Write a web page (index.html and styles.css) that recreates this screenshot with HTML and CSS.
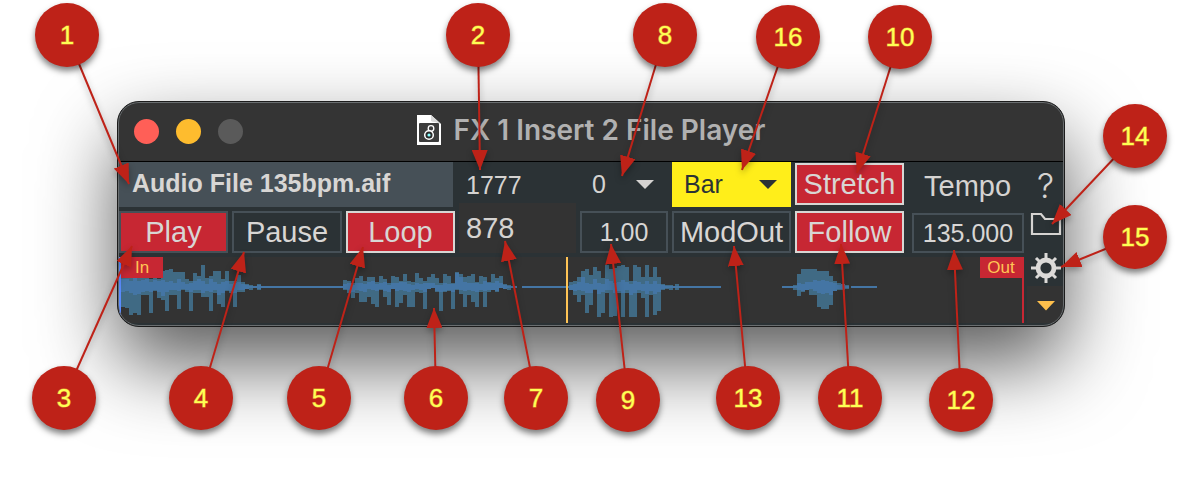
FILE: index.html
```
<!DOCTYPE html>
<html lang="en">
  <head>
    <meta charset="UTF-8" />
    <meta name="viewport" content="width=device-width, initial-scale=1.0" />
    <title>FX 1 Insert 2 File Player</title>
    <link rel="stylesheet" href="styles.css">
  </head>
  <body>
    <main class="diagram">
      <section class="window">
        <header class="titlebar">
          <div class="lights">
            <button class="light close" aria-label="Close"></button>
            <button class="light minimize" aria-label="Minimize"></button>
            <button class="light zoom" aria-label="Zoom" disabled></button>
          </div>
          <h1 class="title">
            <svg class="title-icon" width="24" height="30" viewBox="0 0 24 30">
              <path d="M0 0H14L24 9V30H0Z" fill="#fff" />
              <path d="M14 0V6Q15 7 18 7L24 9Z" fill="#d8d8d8" />
              <rect x="2" y="8" width="20" height="19" rx="1" fill="#3c3c3c" />
              <circle cx="14" cy="13.5" r="2.8" fill="none" stroke="#fff" stroke-width="1.3" />
              <circle cx="12" cy="20" r="4.3" fill="#2b2b2b" stroke="#fff" stroke-width="1.5" />
              <circle cx="12" cy="20" r="1.6" fill="#8ff" />
            </svg>
            FX 1 Insert 2 File Player
          </h1>
        </header>

        <div class="panel">
          <div class="controls">
            <div class="file-name">Audio File 135bpm.aif</div>
            <div class="position">
              <output class="total">1777</output>
              <output class="current">878</output>
            </div>
            <label class="dropdown">
              <select aria-label="Offset">
                <option>0</option>
              </select>
            </label>
            <label class="dropdown yellow">
              <select aria-label="Quantize">
                <option>Bar</option>
              </select>
            </label>
            <button class="top on lit">Stretch</button>
            <label class="tempo-label" for="tempo">Tempo</label>

            <button class="on">Play</button>
            <button>Pause</button>
            <button class="on lit">Loop</button>
            <input class="speed" type="text" value="1.00" aria-label="Speed" />
            <button>ModOut</button>
            <button class="on lit">Follow</button>
            <input class="tempo" id="tempo" type="text" value="135.000" />

            <div class="wave">
              <svg class="wave-shape" viewBox="0 0 905 66" preserveAspectRatio="none">
                <path
                  class="wave-outer"
                  d="M4 20V50M8 20V51M12 20V58M16 20V56M20 20V58M24 21V38M28 20V38M32 22V56M36 20V34M40 22V41M44 14V43M48 13V54M52 12V38M56 15V38M60 15V52M64 15V33M68 22V35M72 24V54M76 16V36M80 19V36M84 8V40M88 21V40M92 19V54M96 14V36M100 14V47M104 22V50M108 14V34M112 24V36M116 24V50M120 18V35M124 25V35M128 27V32M132 28V33M140 27V33
                  M226 23V33M230 24V36M234 26V41M238 21V36M242 19V45M246 24V45M250 20V40M254 20V47M258 25V50M262 19V33M266 22V40M270 26V48M274 19V32M278 20V50M282 24V46M286 17V38M290 24V50M294 25V50M298 16V35M302 21V36M306 24V52M310 20V32M314 17V31M318 21V35M322 26V54M326 17V35M330 19V34M334 26V52M338 15V33M342 17V37M346 20V50M350 19V38M354 17V45M358 25V50M362 19V35M366 20V50M370 25V35M374 17V33M378 21V35M382 19V31M386 27V32M390 28V33
                  M452 25V33M456 24V38M460 20V45M464 14V38M468 12V56M472 18V48M476 10V33M480 14V60M484 21V56M488 8V36M492 12V60M496 11V59M500 9V36M504 8V60M508 10V36M512 24V60M516 8V60M520 10V36M524 20V41M528 8V60M532 20V38M536 10V58M540 20V54M544 27V33M548 28V32M552 28V33M558 27V33
                  M676 28V33M680 17V39M684 12V35M688 12V33M692 12V38M696 12V38M700 14V50M704 14V52M708 14V52M712 19V48M716 24V34M720 26V33M724 27V33M728 28V32"
                />
                <path
                  class="wave-inner"
                  d="M4 22V35M8 22V34M12 24V36M16 20V38M20 24V37M24 23V35M28 22V34M32 25V35M36 23V33M40 24V35M44 23V39M48 25V35M52 24V33M56 26V33M60 22V34M64 25V32M68 27V33M72 26V35M76 24V33M80 22V33M84 24V36M88 27V34M92 22V35M96 25V33M100 27V38M104 25V36M108 24V33M112 27V34M116 26V36M120 25V33M124 27V33M128 28V32M140 28V32
                  M226 27V32M230 26V33M234 28V35M238 26V33M242 26V34M246 27V35M250 25V32M254 24V33M258 27V34M262 26V32M266 25V34M270 28V35M274 26V32M278 26V34M282 25V33M286 25V34M290 27V35M294 28V33M298 26V32M302 27V33M306 26V35M310 26V32M314 26V31M318 28V34M322 28V35M326 26V34M330 27V33M334 27V35M338 16V32M342 20V33M346 25V34M350 26V33M354 26V34M358 26V35M362 27V33M366 24V34M370 26V33M374 26V33M378 24V34M382 26V31M386 28V32
                  M452 28V33M456 27V34M460 25V33M464 20V34M468 26V36M472 27V36M476 22V32M480 26V37M484 27V35M488 22V33M492 24V33M496 26V36M500 25V34M504 23V36M508 25V33M512 27V38M516 24V36M520 25V33M524 27V34M528 24V37M532 27V34M536 24V37M540 27V35M544 28V32
                  M680 26V33M684 27V34M688 25V33M692 25V32M696 23V34M700 24V36M704 23V37M708 24V36M712 25V38M716 26V34M720 28V32M724 27V32"
                />
                <path class="wave-line" d="M2 30H398M403 30H602M663 30H730M732 30H758" />
              </svg>
              <span class="marker in">In</span>
              <span class="marker out">Out</span>
              <span class="playhead"></span>
            </div>
          </div>

          <nav class="side">
            <button class="icon help" aria-label="Help">?</button>
            <button class="icon open" aria-label="Open file">
              <svg width="32" height="24" viewBox="0 0 32 24">
                <path d="M2 2H11L15 7H30V22H2Z" fill="none" stroke="#d5d3d1" stroke-width="2.2" />
              </svg>
            </button>
            <button class="icon settings" aria-label="Settings">
              <svg width="32" height="32" viewBox="0 0 32 32" fill="none" stroke="#dcdad8">
                <circle cx="16" cy="16" r="8" stroke-width="4.8" />
                <path
                  stroke-width="3"
                  d="M16 1V8M16 24V31M1 16H8M24 16H31M6 6L10 10M22 22L26 26M6 26L10 22M22 10L26 6"
                />
              </svg>
            </button>
            <button class="icon more" aria-label="More">
              <svg width="18" height="10" viewBox="0 0 18 10">
                <path d="M0 0H18L9 9.5Z" fill="#ffc04c" />
              </svg>
            </button>
          </nav>
        </div>
      </section>

      <svg class="callouts" viewBox="0 0 1182 482" preserveAspectRatio="none">
        <defs>
          <marker
            id="head"
            markerUnits="userSpaceOnUse"
            markerWidth="20"
            markerHeight="16"
            refX="20"
            refY="8"
            orient="auto"
          >
            <path class="arrowhead" d="M0 0L20 8L0 16Z" />
          </marker>
        </defs>
        <g class="arrows">
          <path d="M67 35L129 184" />
          <path d="M478 35L480 170" />
          <path d="M665 35L622 176" />
          <path d="M788 37L742 170" />
          <path d="M900 37L857 173" />
          <path d="M1135 136L1052 224" />
          <path d="M1135 237L1061 267" />
          <path d="M64 398L132 246" />
          <path d="M201 398L244 252" />
          <path d="M319 398L363 247" />
          <path d="M436 398L434 308" />
          <path d="M536 398L505 241" />
          <path d="M628 400L611 244" />
          <path d="M748 398L734 246" />
          <path d="M850 398L841 244" />
          <path d="M961 400L954 250" />
        </g>
        <g class="circles">
          <circle cx="67" cy="35" r="32" />
          <circle cx="478" cy="35" r="32" />
          <circle cx="665" cy="35" r="32" />
          <circle cx="788" cy="37" r="32" />
          <circle cx="900" cy="37" r="32" />
          <circle cx="1135" cy="136" r="32" />
          <circle cx="1135" cy="237" r="32" />
          <circle cx="64" cy="398" r="32" />
          <circle cx="201" cy="398" r="32" />
          <circle cx="319" cy="398" r="32" />
          <circle cx="436" cy="398" r="32" />
          <circle cx="536" cy="398" r="32" />
          <circle cx="628" cy="400" r="32" />
          <circle cx="748" cy="398" r="32" />
          <circle cx="850" cy="398" r="32" />
          <circle cx="961" cy="400" r="32" />
        </g>
        <g class="numbers">
          <text x="67" y="44">1</text>
          <text x="478" y="44">2</text>
          <text x="665" y="44">8</text>
          <text x="788" y="46">16</text>
          <text x="900" y="46">10</text>
          <text x="1135" y="145">14</text>
          <text x="1135" y="246">15</text>
          <text x="64" y="407">3</text>
          <text x="201" y="407">4</text>
          <text x="319" y="407">5</text>
          <text x="436" y="407">6</text>
          <text x="536" y="407">7</text>
          <text x="628" y="409">9</text>
          <text x="748" y="407">13</text>
          <text x="850" y="407">11</text>
          <text x="961" y="409">12</text>
        </g>
      </svg>
    </main>
  </body>
</html>
```
FILE: styles.css
```
* {
  margin: 0;
  padding: 0;
  box-sizing: border-box;
  font-family: "Liberation Sans", Arial, sans-serif;
}

body {
  background-color: #fff;
}

.diagram {
  position: relative;
  overflow: hidden;
  padding: 101px 117px 155px;
}

.window {
  background-color: #2b3235;
  border: 1px solid #1c1c1c;
  border-radius: 22px;
  box-shadow: 0 36px 80px rgba(0, 0, 0, 0.65);
  overflow: hidden;
  position: relative;
}

/* light rim just inside the window edge */
.window::after {
  content: "";
  position: absolute;
  inset: 0;
  border: 1px solid #6a6e70;
  border-radius: 21px;
  pointer-events: none;
}

.titlebar {
  display: grid;
  grid-template-columns: 1fr auto 1fr;
  align-items: center;
  height: 60px;
  padding: 0 16px;
  background-color: #343434;
  border-bottom: 1px solid #000;
}

.lights {
  display: flex;
  gap: 17px;
}

.light {
  width: 25px;
  height: 25px;
  border: none;
  border-radius: 50%;
}

.close {
  background-color: #ff5f57;
}

.minimize {
  background-color: #febc2e;
}

.zoom {
  background-color: #5a5a5a;
}

.title {
  display: flex;
  align-items: center;
  gap: 13px;
  padding-bottom: 3px;
  color: #b1b1b1;
  font-family: Inter, sans-serif;
  font-size: 28px;
  font-weight: 600;
  white-space: nowrap;
}

.panel {
  display: flex;
  padding: 0 1px 3px;
}

.controls {
  flex: 1;
  display: grid;
  grid-template-columns:
    minmax(0, 109fr) minmax(0, 110fr) minmax(0, 109fr) minmax(0, 117fr)
    minmax(0, 88fr) minmax(0, 119fr) minmax(0, 109fr) minmax(0, 116fr);
  grid-template-rows: 45px 42px 66px;
  gap: 4px;
}

.file-name {
  grid-column: span 3;
  margin-right: 2px;
  padding-left: 13px;
  background-color: #465057;
  color: #d8d6d4;
  font-size: 25px;
  font-weight: 700;
  line-height: 43px;
  white-space: nowrap;
  overflow: hidden;
}

.position {
  grid-row: span 2;
  display: flex;
  flex-direction: column;
  color: #d5d3d1;
}

.total {
  height: 41px;
  padding-left: 7px;
  font-size: 25px;
  line-height: 46px;
}

.current {
  flex: 1;
  padding-left: 7px;
  background-color: #333;
  font-size: 29px;
  line-height: 50px;
}

.dropdown {
  display: grid;
  grid-template-columns: 1fr 18px;
  align-items: center;
  padding-right: 14px;
  color: #d5d3d1;
}

.dropdown::after {
  content: "";
  grid-area: 1 / 2;
  height: 9px;
  background-color: currentColor;
  clip-path: polygon(0 0, 100% 0, 50% 100%);
  pointer-events: none;
}

.dropdown select {
  grid-area: 1 / 1 / 2 / 3;
  appearance: none;
  padding: 0 0 2px 12px;
  background: none;
  border: none;
  color: inherit;
  font-size: 25px;
}

.yellow {
  background-color: #ffee1a;
  color: #2b3235;
}

.controls button,
.controls input {
  background-color: #2b3235;
  border: 2px solid #465057;
  color: #d8d6d4;
  min-width: 0;
}

.controls button {
  font-size: 29px;
}

.controls input {
  font-size: 25px;
  text-align: center;
}

.controls .on {
  background-color: #c72733;
}

.controls .lit {
  border-color: #d8d6d4;
}

.controls .top {
  height: 42px;
  margin-top: 1px;
}

.controls .tempo {
  margin: 2px 0 0 4px;
}

.tempo-label {
  padding-left: 16px;
  color: #d5d3d1;
  font-size: 29px;
  line-height: 48px;
}

.wave {
  grid-column: 1 / -1;
  position: relative;
  background-color: #333;
}

.wave-shape {
  display: block;
  width: 100%;
  height: 66px;
}

.wave-shape path {
  fill: none;
  stroke-width: 4px;
}

.wave-shape .wave-outer {
  stroke: #406a84;
}

.wave-shape .wave-inner {
  stroke: #4475a4;
}

.wave-shape .wave-line {
  stroke: #4475a4;
  stroke-width: 2px;
}

.marker {
  position: absolute;
  top: 0;
  width: 44px;
  height: 66px;
  color: #ffc455;
  font-size: 17px;
  line-height: 21px;
  text-align: center;
  background: linear-gradient(#c72733, #c72733) no-repeat 0 0 / 100% 21px;
}

.in {
  left: 0;
  border-left: 2px solid #5b8cff;
}

.out {
  right: 0;
  border-right: 2px solid #c72733;
}

.playhead {
  position: absolute;
  top: 0;
  bottom: 0;
  left: 49.4%;
  width: 2px;
  background-color: #ffc455;
}

.side {
  width: 39px;
  padding-left: 4px;
  display: flex;
  flex-direction: column;
  align-items: center;
  background: linear-gradient(#333, #333) no-repeat 3px 124px;
}

.icon {
  display: flex;
  justify-content: center;
  align-items: center;
  width: 35px;
  background: none;
  border: none;
}

.help {
  height: 46px;
  color: #d5d3d1;
  font-family: Inter, sans-serif;
  font-size: 34px;
  font-weight: 300;
}

.open {
  height: 32px;
}

.settings {
  height: 56px;
}

.more {
  height: 20px;
}

.callouts {
  position: absolute;
  top: 0;
  left: 0;
  width: 100%;
  height: 482px;
  pointer-events: none;
}

.arrows {
  stroke: #be2218;
  stroke-width: 2px;
  filter: drop-shadow(0 3px 3px rgba(0, 0, 0, 0.3));
}

.arrows path {
  marker-end: url(#head);
}

.arrowhead {
  fill: #be2218;
  stroke: none;
}

.circles {
  fill: #be2218;
  filter: drop-shadow(0 4px 3px rgba(0, 0, 0, 0.5));
}

.numbers {
  fill: #ffff54;
  stroke: rgba(255, 255, 84, 0.5);
  stroke-width: 1px;
  font-size: 26px;
  text-anchor: middle;
}
```
